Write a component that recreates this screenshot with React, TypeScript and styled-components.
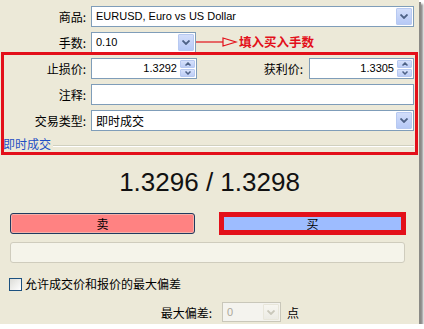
import React from "react";
import styled, { createGlobalStyle } from "styled-components";

const Global = createGlobalStyle`
  html, body { margin: 0; padding: 0; background: #ffffff; }
  * { box-sizing: border-box; }
`;

const RED = "#e3101a";
const CJK = `"Noto Sans CJK SC", "Liberation Sans", sans-serif`;
const LATIN = `"Liberation Sans", "Noto Sans CJK SC", sans-serif`;

const Panel = styled.div`
  position: relative;
  width: 419px;
  height: 324px;
  background: #ece9d8;
  box-shadow: 2px 2px 0 #8a8a86, 4px 4px 2px rgba(0, 0, 0, 0.45);
  font-family: ${CJK};
  font-size: 12px;
  color: #000;
  padding-top: 6px;
`;

const Row = styled.div`
  display: flex;
  align-items: center;
  height: 21px;
  margin-bottom: 5px;
`;

const Label = styled.div<{ $w?: number; $gap?: number }>`
  width: ${(p) => p.$w ?? 86}px;
  margin-right: ${(p) => p.$gap ?? 5}px;
  text-align: right;
  font-size: 12px;
  line-height: 21px;
  white-space: nowrap;
`;

const Box = styled.div<{ $w: number; $disabled?: boolean; $h?: number }>`
  width: ${(p) => p.$w}px;
  height: ${(p) => p.$h ?? 21}px;
  border: 1px solid ${(p) => (p.$disabled ? "#c9c7ba" : "#7f9db9")};
  background: ${(p) => (p.$disabled ? "#f4f3ee" : "#ffffff")};
  display: flex;
  align-items: stretch;
  padding: 1px;
`;

const Value = styled.div<{ $right?: boolean; $disabled?: boolean; $cjk?: boolean }>`
  flex: 1;
  font-family: ${(p) => (p.$cjk ? CJK : LATIN)};
  font-size: ${(p) => (p.$cjk ? 12 : 11)}px;
  line-height: 17px;
  padding: 0 ${(p) => (p.$right ? 3 : 3)}px;
  text-align: ${(p) => (p.$right ? "right" : "left")};
  color: ${(p) => (p.$disabled ? "#aca899" : "#000")};
  white-space: nowrap;
  overflow: hidden;
`;

const DropBtn = styled.div<{ $disabled?: boolean }>`
  width: 16px;
  border: 1px solid ${(p) => (p.$disabled ? "#e8e6da" : "#b7c9f1")};
  border-radius: 1px;
  background: ${(p) =>
    p.$disabled
      ? "linear-gradient(#f7f6f0, #ecebe4)"
      : "linear-gradient(#d3defa, #b6c9f6)"};
  display: flex;
  align-items: center;
  justify-content: center;
`;

const SpinCol = styled.div`
  width: 15px;
  display: flex;
  flex-direction: column;
  gap: 1px;
`;

const SpinHalf = styled.div`
  flex: 1;
  border: 1px solid #b7c9f1;
  border-radius: 1px;
  background: linear-gradient(#d6e1fb, #bccdf6);
  display: flex;
  align-items: center;
  justify-content: center;
`;

const Chevron = ({ up, color = "#4d6185" }: { up?: boolean; color?: string }) => (
  <svg width="8" height="5" viewBox="0 0 8 5">
    <path
      d={up ? "M0.5 4.5 L4 1 L7.5 4.5" : "M0.5 0.5 L4 4 L7.5 0.5"}
      fill="none"
      stroke={color}
      strokeWidth="1.8"
    />
  </svg>
);

const SmallChevron = ({ up }: { up?: boolean }) => (
  <svg width="6" height="4" viewBox="0 0 6 4">
    <path
      d={up ? "M0.5 3.5 L3 1 L5.5 3.5" : "M0.5 0.5 L3 3 L5.5 0.5"}
      fill="none"
      stroke="#4d6185"
      strokeWidth="1.5"
    />
  </svg>
);

const Select = ({
  w,
  value,
  disabled,
  cjk,
  h,
}: {
  w: number;
  value: string;
  disabled?: boolean;
  cjk?: boolean;
  h?: number;
}) => (
  <Box $w={w} $disabled={disabled} $h={h}>
    <Value $disabled={disabled} $cjk={cjk}>
      {value}
    </Value>
    <DropBtn $disabled={disabled}>
      <Chevron color={disabled ? "#c9c7ba" : "#4d6185"} />
    </DropBtn>
  </Box>
);

const Spinner = ({ w, value }: { w: number; value: string }) => (
  <Box $w={w}>
    <Value $right>{value}</Value>
    <SpinCol>
      <SpinHalf>
        <SmallChevron up />
      </SpinHalf>
      <SpinHalf>
        <SmallChevron />
      </SpinHalf>
    </SpinCol>
  </Box>
);

const GroupHeader = styled.div`
  display: flex;
  align-items: center;
  height: 16px;
  padding-left: 3px;
  padding-right: 5px;
`;

const GroupTitle = styled.span`
  color: #1f4fc4;
  font-size: 12px;
  line-height: 16px;
`;

const GroupLine = styled.div`
  flex: 1;
  margin-left: 2px;
  margin-top: 3px;
  border-top: 1px solid #d0d0bf;
  border-bottom: 1px solid #ffffff;
`;

const Price = styled.div`
  margin-top: 15px;
  height: 30px;
  line-height: 30px;
  text-align: center;
  font-family: ${LATIN};
  font-size: 26px;
  color: #111;
`;

const ButtonRow = styled.div`
  display: flex;
  gap: 25px;
  padding-left: 10px;
  margin-top: 16px;
`;

const TradeButton = styled.div<{ $kind: "sell" | "buy" }>`
  width: 185px;
  height: 21px;
  display: flex;
  align-items: center;
  justify-content: center;
  font-size: 12px;
  border-radius: ${(p) => (p.$kind === "sell" ? "3px" : "0")};
  background: ${(p) => (p.$kind === "sell" ? "#ff8282" : "#9dbcff")};
  border: 1px solid ${(p) => (p.$kind === "sell" ? "#1f3b60" : RED)};
  box-shadow: ${(p) =>
    p.$kind === "sell"
      ? "inset 0 0 0 1px #f4b0a8"
      : `0 0 0 1px ${RED}, inset 0 0 0 3px ${RED}`};
`;

const Progress = styled.div`
  margin: 8px 0 0 10px;
  width: 395px;
  height: 21px;
  border: 1px solid #cfccbd;
  border-radius: 3px;
  background: #f5f4ea;
`;

const CheckRow = styled.div`
  display: flex;
  align-items: center;
  margin-top: 14px;
  padding-left: 9px;
  height: 14px;
`;

const CheckBox = styled.div`
  width: 13px;
  height: 13px;
  border: 1px solid #1c5180;
  background: linear-gradient(135deg, #dcdcd7, #ffffff);
  margin-right: 3px;
`;

const CheckText = styled.span`
  font-size: 12px;
  line-height: 14px;
`;

const BottomRow = styled.div`
  display: flex;
  align-items: center;
  margin-top: 11px;
  height: 20px;
`;

const Unit = styled.span`
  margin-left: 6px;
  font-size: 12px;
`;

const Annotation = styled.div`
  position: absolute;
  left: 196px;
  top: 35px;
  display: flex;
  align-items: center;
  height: 14px;
`;

const AnnotText = styled.span`
  color: ${RED};
  font-weight: bold;
  font-size: 12.5px;
  line-height: 14px;
  margin-left: 1px;
`;

const Highlight = styled.div`
  position: absolute;
  left: 1px;
  top: 52px;
  width: 417px;
  height: 103px;
  border: 3px solid ${RED};
  pointer-events: none;
`;

export default function App() {
  return (
    <>
      <Global />
      <Panel>
        <Row>
          <Label>商品:</Label>
          <Select w={323} value="EURUSD, Euro vs US Dollar" />
        </Row>
        <Row>
          <Label>手数:</Label>
          <Select w={105} value="0.10" />
        </Row>
        <Row>
          <Label>止损价:</Label>
          <Spinner w={106} value="1.3292" />
          <Label $w={106} $gap={6}>
            获利价:
          </Label>
          <Spinner w={105} value="1.3305" />
        </Row>
        <Row>
          <Label>注释:</Label>
          <Box $w={323} />
        </Row>
        <Row>
          <Label>交易类型:</Label>
          <Select w={323} value="即时成交" cjk />
        </Row>
        <GroupHeader>
          <GroupTitle>即时成交</GroupTitle>
          <GroupLine />
        </GroupHeader>
        <Price>1.3296 / 1.3298</Price>
        <ButtonRow>
          <TradeButton $kind="sell">卖</TradeButton>
          <TradeButton $kind="buy">买</TradeButton>
        </ButtonRow>
        <Progress />
        <CheckRow>
          <CheckBox />
          <CheckText>允许成交价和报价的最大偏差</CheckText>
        </CheckRow>
        <BottomRow>
          <Label $w={212} $gap={10}>
            最大偏差:
          </Label>
          <Select w={59} h={20} value="0" disabled />
          <Unit>点</Unit>
        </BottomRow>

        <Annotation>
          <svg width="42" height="12" viewBox="0 0 42 12">
            <path d="M0 6 H27" stroke={RED} strokeWidth="1.2" fill="none" />
            <path d="M27 2 L40 6 L27 10 Z" stroke={RED} strokeWidth="1.2" fill="none" />
          </svg>
          <AnnotText>填入买入手数</AnnotText>
        </Annotation>
        <Highlight />
      </Panel>
    </>
  );
}
